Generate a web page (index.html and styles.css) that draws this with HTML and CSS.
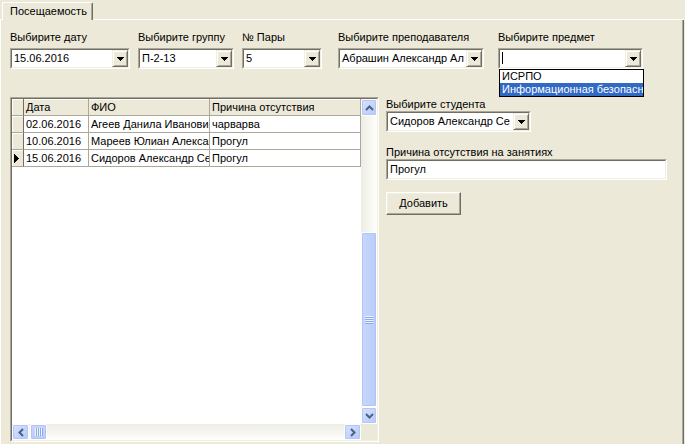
FILE: index.html
```html
<!DOCTYPE html>
<html lang="ru">
<head>
<meta charset="utf-8">
<title>Посещаемость</title>
<link rel="stylesheet" href="styles.css">
</head>
<body>
<div class="tabstrip">
  <div class="tabgap"></div>
  <div class="tab">Посещаемость</div>
  <div class="tabfill"></div>
</div>
<div class="page">
  <div class="fields">
    <div class="field f-date">
      <div class="label">Выбирите дату</div>
      <div class="combo"><div class="combo-in"><div class="val">15.06.2016</div><div class="dbtn"><svg width="7" height="4" viewBox="0 0 7 4" shape-rendering="crispEdges"><path d="M0 0h7v1h-1v1h-1v1h-1v1h-1v-1h-1v-1h-1v-1h-1z"/></svg></div></div></div>
    </div>
    <div class="field f-group">
      <div class="label">Выбирите группу</div>
      <div class="combo"><div class="combo-in"><div class="val">П-2-13</div><div class="dbtn"><svg width="7" height="4" viewBox="0 0 7 4" shape-rendering="crispEdges"><path d="M0 0h7v1h-1v1h-1v1h-1v1h-1v-1h-1v-1h-1v-1h-1z"/></svg></div></div></div>
    </div>
    <div class="field f-pair">
      <div class="label">№ Пары</div>
      <div class="combo"><div class="combo-in"><div class="val">5</div><div class="dbtn"><svg width="7" height="4" viewBox="0 0 7 4" shape-rendering="crispEdges"><path d="M0 0h7v1h-1v1h-1v1h-1v1h-1v-1h-1v-1h-1v-1h-1z"/></svg></div></div></div>
    </div>
    <div class="field f-teacher">
      <div class="label">Выбирите преподавателя</div>
      <div class="combo"><div class="combo-in"><div class="val">Абрашин Александр Ал</div><div class="dbtn"><svg width="7" height="4" viewBox="0 0 7 4" shape-rendering="crispEdges"><path d="M0 0h7v1h-1v1h-1v1h-1v1h-1v-1h-1v-1h-1v-1h-1z"/></svg></div></div></div>
    </div>
    <div class="field f-subject">
      <div class="label">Выбирите предмет</div>
      <div class="combo"><div class="combo-in"><div class="val"><span class="caret"></span></div><div class="dbtn"><svg width="7" height="4" viewBox="0 0 7 4" shape-rendering="crispEdges"><path d="M0 0h7v1h-1v1h-1v1h-1v1h-1v-1h-1v-1h-1v-1h-1z"/></svg></div></div></div>
      <div class="droplist">
        <div class="item">ИСРПО</div>
        <div class="item sel">Информационная безопасн</div>
      </div>
    </div>
  </div>

  <div class="main">
    <div class="grid">
      <div class="grid-in">
        <div class="data">
          <div class="row head">
            <div class="rh"></div>
            <div class="hc">Дата</div>
            <div class="hc">ФИО</div>
            <div class="hc">Причина отсутствия</div>
          </div>
          <div class="row">
            <div class="rh"></div>
            <div class="c">02.06.2016</div>
            <div class="c">Агеев Данила Иванови</div>
            <div class="c">чарварва</div>
          </div>
          <div class="row">
            <div class="rh"></div>
            <div class="c">10.06.2016</div>
            <div class="c">Мареев Юлиан Алексан</div>
            <div class="c">Прогул</div>
          </div>
          <div class="row">
            <div class="rh cur"><svg width="5" height="9" viewBox="0 0 5 9" shape-rendering="crispEdges"><path d="M0 0h1v1h1v1h1v1h1v1h1v1h-1v1h-1v1h-1v1h-1v1h-1z"/></svg></div>
            <div class="c">15.06.2016</div>
            <div class="c">Сидоров Александр Се</div>
            <div class="c">Прогул</div>
          </div>
        </div>
        <div class="vscroll">
          <div class="sbtn"><svg width="9" height="6" viewBox="0 0 9 6"><path d="M1 5 L4.5 1.5 L8 5" fill="none" stroke="#4D6185" stroke-width="2"/></svg></div>
          <div class="vtrack"></div>
          <div class="vthumb"><span class="grip"></span></div>
          <div class="sbtn"><svg width="9" height="6" viewBox="0 0 9 6"><path d="M1 1 L4.5 4.5 L8 1" fill="none" stroke="#4D6185" stroke-width="2"/></svg></div>
        </div>
        <div class="hscroll">
          <div class="sbtn"><svg width="6" height="9" viewBox="0 0 6 9"><path d="M5 1 L1.5 4.5 L5 8" fill="none" stroke="#4D6185" stroke-width="2"/></svg></div>
          <div class="hthumb"><span class="hgrip"></span></div>
          <div class="htrack"></div>
          <div class="sbtn"><svg width="6" height="9" viewBox="0 0 6 9"><path d="M1 1 L4.5 4.5 L1 8" fill="none" stroke="#4D6185" stroke-width="2"/></svg></div>
        </div>
        <div class="corner"></div>
      </div>
    </div>

    <div class="side">
      <div class="label">Выбирите студента</div>
      <div class="combo c-student"><div class="combo-in"><div class="val">Сидоров Александр Се</div><div class="dbtn"><svg width="7" height="4" viewBox="0 0 7 4" shape-rendering="crispEdges"><path d="M0 0h7v1h-1v1h-1v1h-1v1h-1v-1h-1v-1h-1v-1h-1z"/></svg></div></div></div>
      <div class="label l-reason">Причина отсутствия на занятиях</div>
      <div class="combo textbox"><div class="combo-in"><div class="val">Прогул</div></div></div>
      <div class="addbtn">Добавить</div>
    </div>
  </div>
</div>
</body>
</html>
```

FILE: styles.css
```css
* { box-sizing: border-box; }

body {
  margin: 0;
  width: 685px;
  height: 444px;
  overflow: hidden;
  background: #ECE9D8;
  font-family: "Liberation Sans", Arial, sans-serif;
  font-size: 11px;
  color: #000;
}

/* tab strip */
.tabstrip {
  display: flex;
  height: 20px;
}
.tabgap {
  width: 2px;
  border-bottom: 1px solid #fff;
}
.tab {
  margin-top: 2px;
  width: 91px;
  height: 18px;
  border: 1px solid;
  border-color: #fff #716F64 transparent #fff;
  border-bottom: 0;
  border-radius: 2px 2px 0 0;
  box-shadow: inset -1px 0 #ACA899;
  padding: 2px 0 0 7px;
  line-height: 13px;
}
.tabfill {
  flex: 1;
  border-bottom: 1px solid #fff;
  margin-right: 1px;
}

.page {
  height: 424px;
  border-left: 1px solid #fff;
  border-right: 1px solid #716F64;
  box-shadow: inset -1px 0 #ACA899;
  margin-right: 1px;
}

/* top fields */
.fields {
  display: flex;
  padding: 11px 0 0 9px;
}
.field { position: relative; }
.label {
  height: 13px;
  line-height: 13px;
  margin-bottom: 4px;
  white-space: nowrap;
}
.f-date { width: 120px; }
.f-group { width: 96px; margin-left: 8px; }
.f-pair { width: 80px; margin-left: 8px; }
.f-teacher { width: 146px; margin-left: 16px; }
.f-subject { width: 145px; margin-left: 14px; }

.combo {
  height: 21px;
  border: 1px solid;
  border-color: #ACA899 #fff #fff #ACA899;
}
.combo-in {
  height: 19px;
  border: 1px solid;
  border-color: #716F64 #F1EFE2 #F1EFE2 #716F64;
  background: #fff;
  display: flex;
}
.val {
  flex: 1;
  min-width: 0;
  overflow: hidden;
  white-space: nowrap;
  padding-left: 2px;
  line-height: 17px;
}
.dbtn {
  width: 16px;
  height: 17px;
  flex: none;
  background: #ECE9D8;
  border: 1px solid;
  border-color: #F1EFE2 #716F64 #716F64 #F1EFE2;
  box-shadow: inset 1px 1px #fff, inset -1px -1px #ACA899;
  display: flex;
  align-items: center;
  justify-content: center;
}
.dbtn svg { display: block; }
.caret {
  display: block;
  width: 1px;
  height: 12px;
  margin: 2px 0 0 0;
  background: #000;
}

.droplist {
  position: absolute;
  left: 1px;
  top: 38px;
  width: 145px;
  border: 1px solid #000;
  background: #fff;
  z-index: 2;
}
.item {
  height: 13px;
  line-height: 13px;
  padding-left: 2px;
  white-space: nowrap;
  overflow: hidden;
}
.item.sel { background: #316AC5; color: #fff; }

/* main area */
.main {
  display: flex;
  margin-top: 28px;
  padding-left: 9px;
}

.grid {
  width: 369px;
  height: 345px;
  border: 1px solid;
  border-color: #ACA899 #fff #fff #ACA899;
}
.grid-in {
  height: 343px;
  border: 1px solid;
  border-color: #716F64 #F1EFE2 #F1EFE2 #716F64;
  display: grid;
  grid-template-columns: 349px 16px;
  grid-template-rows: 325px 16px;
}
.data {
  background: #fff;
  overflow: hidden;
}
.row {
  display: grid;
  grid-template-columns: 12px 65px 121px 151px;
  height: 17px;
}
.row > div {
  border-right: 1px solid #ACA899;
  border-bottom: 1px solid #ACA899;
  overflow: hidden;
  white-space: nowrap;
  line-height: 16px;
}
.row .rh {
  background: #ECE9D8;
  box-shadow: inset 1px 1px #fff;
  border-right-color: #716F64;
  display: flex;
  align-items: center;
  padding-left: 2px;
}
.row.head > div { background: #ECE9D8; box-shadow: inset 0 1px #fff; }
.row.head > .rh { box-shadow: inset 1px 1px #fff; }
.hc { padding-left: 2px; }
.c { padding-left: 2px; }

/* XP scrollbars */
.vscroll {
  display: flex;
  flex-direction: column;
  background: linear-gradient(to right, #EEEDE5, #FEFEFB);
}
.hscroll {
  display: flex;
  background: linear-gradient(to bottom, #EEEDE5, #FEFEFB);
}
.corner { background: #ECE9D8; }
.sbtn {
  flex: none;
  width: 16px;
  height: 16px;
  border: 1px solid #fff;
  border-radius: 2px;
  background: linear-gradient(135deg, #D6E2FE, #B5C9F9);
  box-shadow: inset 0 0 0 1px #B4C6F2;
  display: flex;
  align-items: center;
  justify-content: center;
}
.sbtn svg { display: block; }
.vscroll .sbtn { height: 17px; }
.vtrack { height: 116px; }
.vthumb {
  height: 175px;
  border: 1px solid #fff;
  border-radius: 2px;
  background: linear-gradient(to right, #C8D7FC, #B9CDF9);
  box-shadow: inset 0 0 0 1px #B1C5F5;
  display: flex;
  align-items: center;
  justify-content: center;
}
.grip {
  display: block;
  width: 8px;
  height: 8px;
  background: repeating-linear-gradient(to bottom, #EEF3FE 0 1px, #8CA8E6 1px 2px);
}
.hscroll .sbtn { width: 17px; }
.hthumb {
  width: 17px;
  margin-left: 1px;
  border: 1px solid #fff;
  border-radius: 2px;
  background: linear-gradient(to bottom, #C8D7FC, #B9CDF9);
  box-shadow: inset 0 0 0 1px #B1C5F5;
  display: flex;
  align-items: center;
  justify-content: center;
}
.hgrip {
  display: block;
  width: 8px;
  height: 8px;
  background: repeating-linear-gradient(to right, #EEF3FE 0 1px, #8CA8E6 1px 2px);
}
.htrack { flex: 1; }

/* side panel */
.side {
  margin-left: 7px;
  padding-top: 1px;
}
.side .label { margin-bottom: 0; }
.c-student { width: 145px; }
.l-reason { margin-top: 14px; }
.textbox { width: 281px; }
.addbtn {
  margin-top: 12px;
  width: 75px;
  height: 23px;
  border: 1px solid;
  border-color: #fff #716F64 #716F64 #fff;
  box-shadow: inset -1px -1px #ACA899, inset 1px 1px #F1EFE2;
  background: #ECE9D8;
  text-align: center;
  line-height: 21px;
}
```
